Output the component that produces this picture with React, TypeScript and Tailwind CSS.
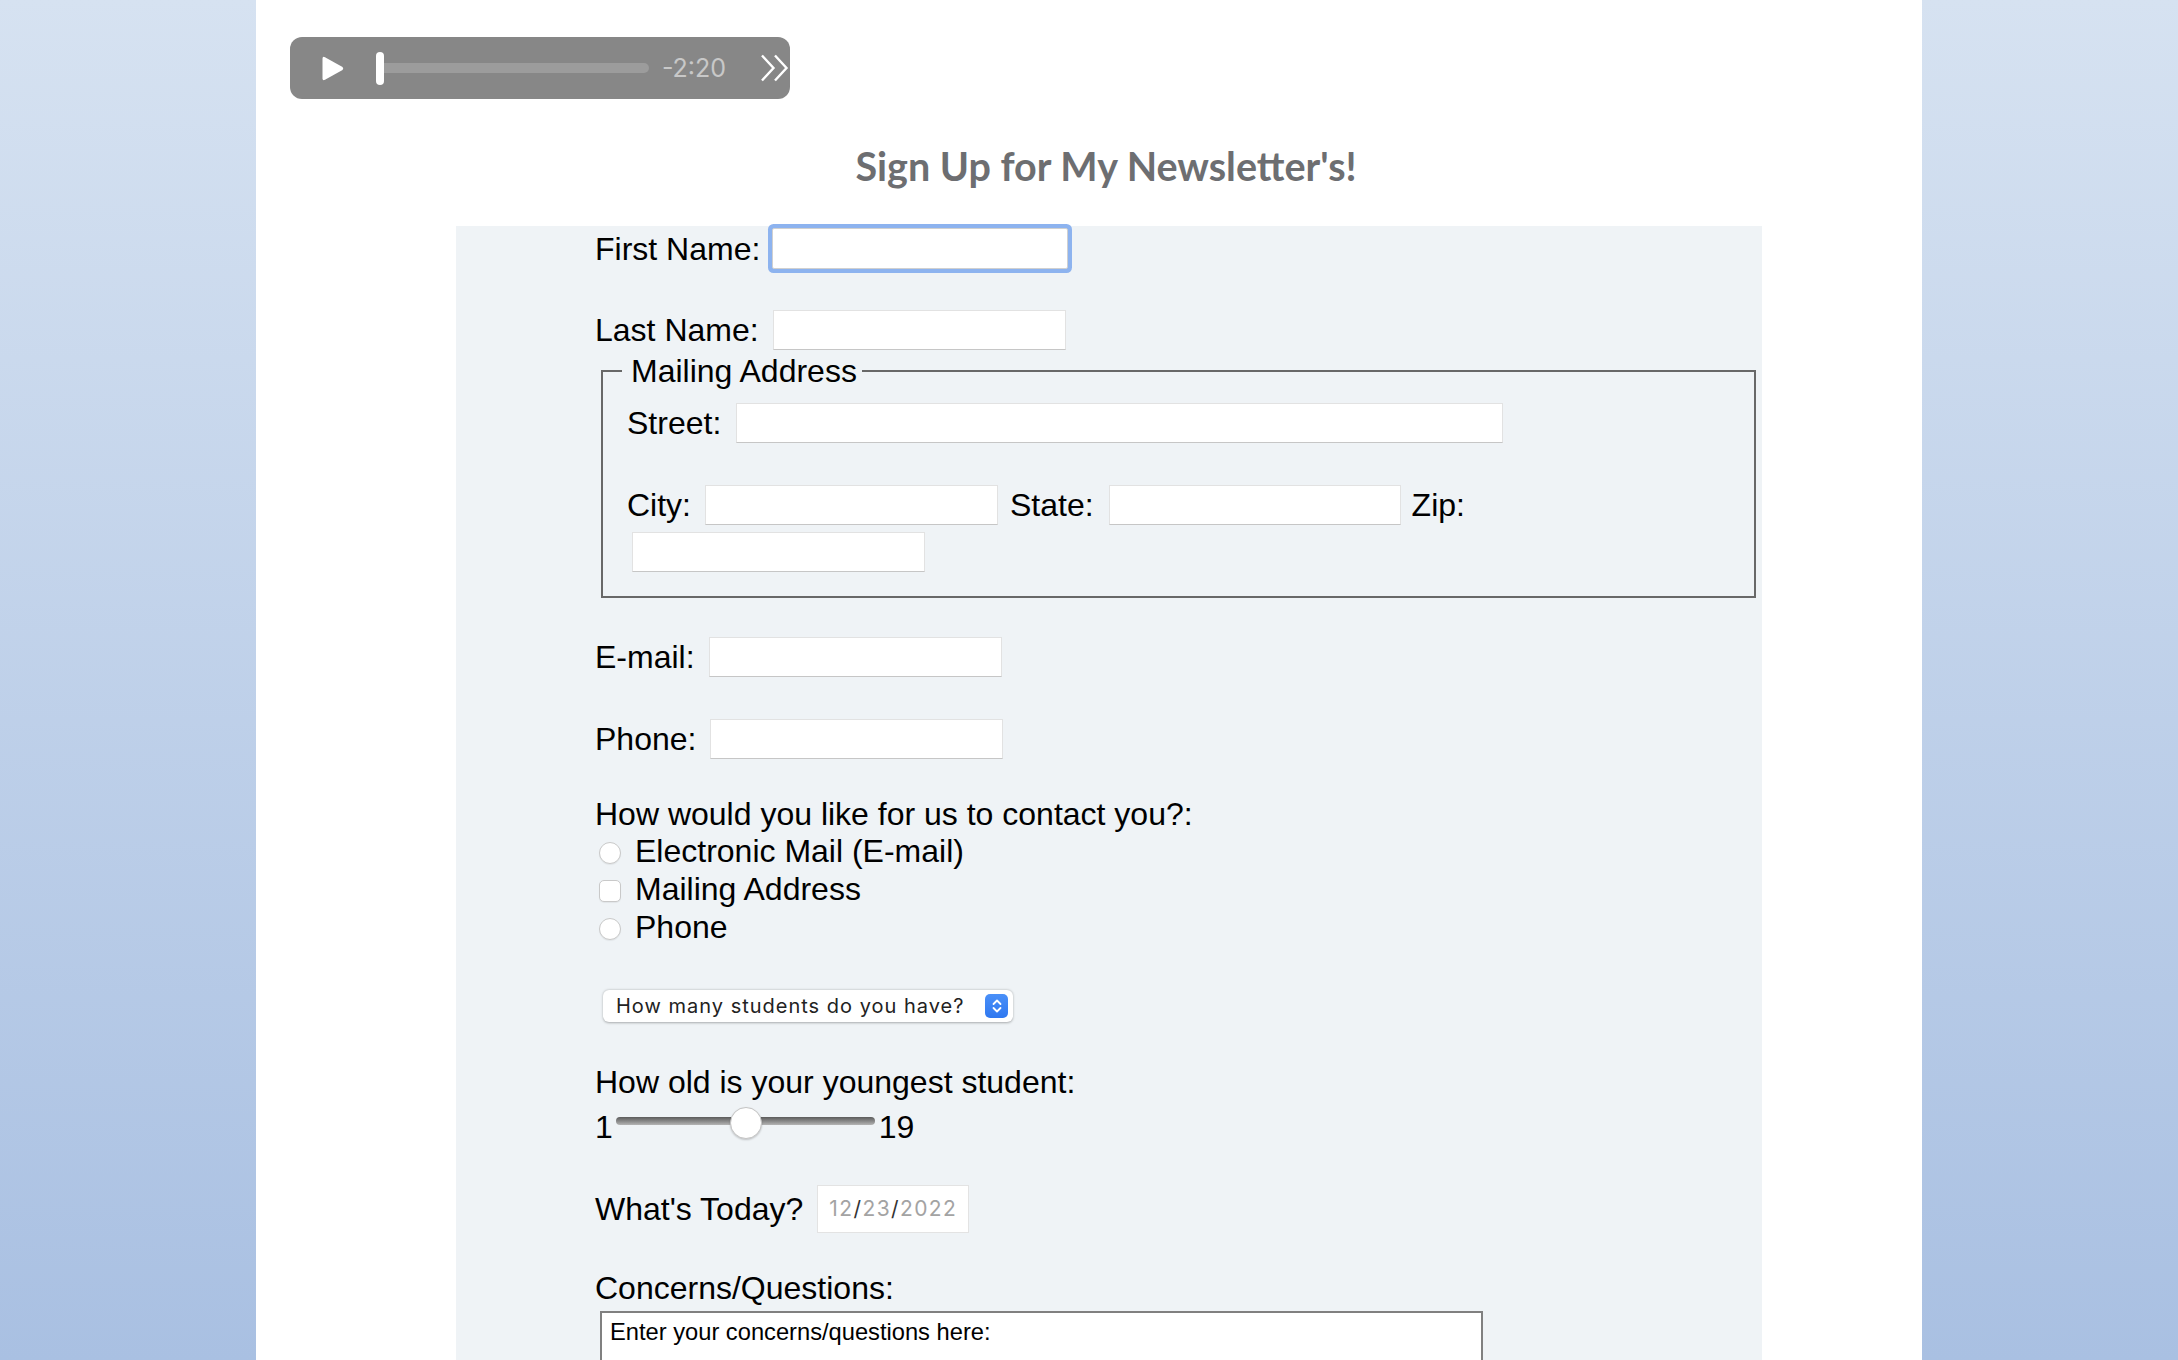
import React from "react";

// plain text field, Safari-ish look
function Field({ className = "w-[293px]" }: { className?: string }) {
  return (
    <input
      type="text"
      className={`h-[40px] shrink-0 border border-[#e2e2e2] border-b-[#c6c6c6] bg-white outline-none ${className}`}
    />
  );
}

function Player() {
  return (
    <div className="flex h-[62px] w-[500px] items-center overflow-hidden rounded-[12px] bg-[#878787] pl-[32px]">
      <svg width="22" height="25" viewBox="0 0 22 25">
        <path
          d="M3 1.2 L20.6 11 Q22 12.5 20.6 14 L3 23.8 Q0.5 25 0.5 22.3 V2.7 Q0.5 0 3 1.2Z"
          fill="#fff"
        />
      </svg>
      <div className="ml-[32px] h-[33px] w-[8px] rounded-full bg-white" />
      <div className="h-[10px] w-[266px] rounded-r-full bg-[#9c9c9c]" />
      <span className="ml-[13px] font-['Inter',sans-serif] text-[25px] leading-none text-[#c8c8c8]">
        -2:20
      </span>
      <svg
        className="ml-[34px] shrink-0"
        width="30"
        height="28"
        viewBox="0 0 30 28"
        fill="none"
        stroke="#fff"
        strokeWidth="2.4"
      >
        <path d="M2 1.5 L13.5 14 L2 26.5 M15 1.5 L26.5 14 L15 26.5" />
      </svg>
    </div>
  );
}

function Choice({ label, box }: { label: string; box?: boolean }) {
  return (
    <div className="flex items-start leading-[38px]">
      <input
        type={box ? "checkbox" : "radio"}
        name="contact"
        className={`ml-[4px] mr-[14px] mt-[10px] h-[22px] w-[22px] shrink-0 appearance-none border border-[#c9c9c9] bg-white shadow-[0_1px_1px_rgba(0,0,0,0.06)] ${
          box ? "rounded-[5px]" : "rounded-full"
        }`}
      />
      <span>{label}</span>
    </div>
  );
}

export default function App() {
  return (
    <div className="h-screen overflow-hidden bg-linear-to-b from-[#d6e2f1] to-[#a9c0e2]">
      <div className="mx-auto h-full w-[1666px] bg-white pl-[34px] pt-[37px]">
        <Player />

        <h1 className="h-[127px] pt-[43px] text-center font-['Lato',sans-serif] text-[39.5px] font-bold leading-[48px] text-[#6d6e71]">
          Sign Up for My Newsletter's!
        </h1>

        <form className="ml-[166px] w-[1306px] bg-[#eff3f6] pl-[139px] pt-[2px] font-['Liberation_Sans',Arial,Helvetica,sans-serif] text-[32px] text-black">
          <div className="flex h-[41px] items-center">
            <label className="mr-[12px]">First Name:</label>
            <input
              type="text"
              className="h-[41px] w-[296px] rounded-[2px] border border-[#d0d0d0] bg-white outline-none ring-[4px] ring-[#8db3ef]"
            />
          </div>

          <div className="mt-[41px] flex h-[40px] items-center">
            <label className="mr-[14px]">Last Name:</label>
            <Field />
          </div>

          <fieldset className="ml-[6px] mt-[3px] w-[1155px] border-2 border-[#686868] pb-[20px] pl-[19px]">
            <legend className="pl-[9px] pr-[5px] leading-[36px]">Mailing Address</legend>
            <div className="ml-[5px] mt-[14px] flex h-[40px] items-center">
              <label className="mr-[15px]">Street:</label>
              <Field className="w-[767px]" />
            </div>
            <div className="ml-[5px] mt-[42px] flex h-[40px] items-center">
              <label className="mr-[14px]">City:</label>
              <Field />
              <label className="ml-[12px] mr-[15px]">State:</label>
              <Field className="w-[292px]" />
              <label className="ml-[11px]">Zip:</label>
            </div>
            <div className="ml-[10px] mt-[3px]">
              <Field />
            </div>
          </fieldset>

          <div className="mt-[39px] flex h-[40px] items-center">
            <label className="mr-[14px]">E-mail:</label>
            <Field />
          </div>

          <div className="mt-[42px] flex h-[40px] items-center">
            <label className="mr-[14px]">Phone:</label>
            <Field />
          </div>

          <p className="mt-[38px] leading-[35px]">How would you like for us to contact you?:</p>
          <Choice label="Electronic Mail (E-mail)" />
          <Choice label="Mailing Address" box />
          <Choice label="Phone" />

          <div className="ml-[8px] mt-[44px] flex h-[32px] w-[410px] items-center justify-between rounded-[6px] bg-white pl-[13px] pr-[5px] font-['Inter',sans-serif] text-[20px] tracking-[1px] text-[#222] shadow-[0_0.5px_2.5px_rgba(0,0,0,0.3)]">
            <span>How many students do you have?</span>
            <span className="flex h-[24px] w-[23px] items-center justify-center rounded-[5px] bg-linear-to-b from-[#4a90f8] to-[#2f78f0]">
              <svg width="12" height="16" viewBox="0 0 12 16" fill="none" stroke="#fff" strokeWidth="1.8" strokeLinecap="round" strokeLinejoin="round">
                <path d="M2.5 6 L6 2.5 L9.5 6 M2.5 10 L6 13.5 L9.5 10" />
              </svg>
            </span>
          </div>

          <p className="mt-[42px] leading-[36px]">How old is your youngest student:</p>
          <div className="mt-[9px] flex h-[36px] items-start leading-[36px]">
            <span>1</span>
            <div className="relative ml-[3px] mr-[4px] h-[36px] w-[259px]">
              <div className="mt-[8px] h-[8px] w-full rounded-full bg-linear-to-b from-[#5c5c5c] to-[#b4b4b4]" />
              <div className="absolute left-[114px] top-[-2px] h-[32px] w-[32px] rounded-full border border-[#c4c4c4] bg-white shadow-[0_1px_2px_rgba(0,0,0,0.2)]" />
            </div>
            <span>19</span>
          </div>

          <div className="mt-[40px] flex h-[48px] items-center">
            <label className="mr-[14px] leading-[36px]">What's Today?</label>
            <div className="flex h-[48px] w-[152px] items-center border border-[#e3e3e3] bg-white pl-[11px] font-['Inter',sans-serif] text-[21px] tracking-[1.4px] text-[#a3a3a3]">
              12<span className="text-[#333]">/</span>23<span className="text-[#333]">/</span>2022
            </div>
          </div>

          <p className="mt-[37px] leading-[36px]">Concerns/Questions:</p>
          <textarea
            className="ml-[5px] mt-[5px] block h-[140px] w-[883px] resize-none border-2 border-[#808080] bg-white px-[8px] pt-[2px] text-[23.7px] text-black outline-none"
            defaultValue="Enter your concerns/questions here:"
          />
          <div className="h-[60px]" />
        </form>
      </div>
    </div>
  );
}
